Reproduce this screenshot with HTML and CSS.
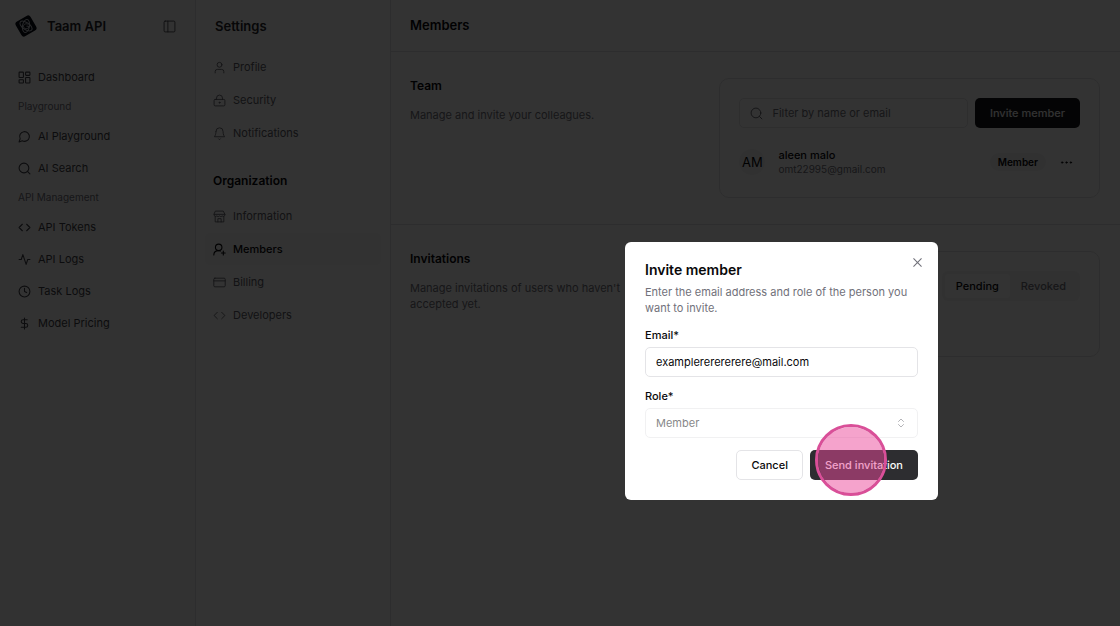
FILE: index.html
```html
<!DOCTYPE html>
<html lang="en">
<head>
<meta charset="utf-8">
<meta name="viewport" content="width=device-width, initial-scale=1">
<title>Members - Taam API</title>
<link rel="stylesheet" href="styles.css">
</head>
<body>
<div class="app">
  <aside class="sidebar">
    <div class="brand">
      <svg class="logo" viewBox="0 0 24 24"><rect x="3.500" y="3.500" width="17" height="17" rx="3" transform="rotate(-30 12 12)" fill="#060a14"/><g fill="none" stroke="#c4c8d0" stroke-width="1"><ellipse cx="12" cy="12" rx="7" ry="3.500" transform="rotate(35 12 12)"/><ellipse cx="12" cy="12" rx="6.500" ry="3.500" transform="rotate(100 12 12)"/><path d="M14.500 10.500c-2-1.500-5-.5-5 1.800s3 3.200 5 1.500v-1.600h-2"/></g></svg>
      <span class="brand-name">Taam API</span>
      <button class="icon-btn" aria-label="Toggle sidebar"><svg class="icon thin" viewBox="0 0 24 24"><rect x="2" y="2" width="20" height="20" rx="2"/><path d="M9 2v20"/></svg></button>
    </div>
    <nav class="nav nav-main" aria-label="Main">
      <a class="nav-item" href="#"><svg class="icon" viewBox="0 0 24 24"><rect x="2" y="2" width="8" height="10" rx="1"/><rect x="14" y="2" width="8" height="6" rx="1"/><rect x="14" y="12" width="8" height="10" rx="1"/><rect x="2" y="16" width="8" height="6" rx="1"/></svg>Dashboard</a>
      <span class="nav-label">Playground</span>
      <a class="nav-item" href="#"><svg class="icon" viewBox="0 0 24 24"><path d="M7.900 20A9 9 0 1 0 4 16.100L2 22Z"/></svg>AI Playground</a>
      <a class="nav-item" href="#"><svg class="icon" viewBox="0 0 24 24"><circle cx="11" cy="11" r="9"/><path d="m22 22-4.500-4.500"/></svg>AI Search</a>
      <span class="nav-label">API Management</span>
      <a class="nav-item" href="#"><svg class="icon" viewBox="0 0 24 24"><path d="m16 18 6-6-6-6M8 6l-6 6 6 6"/></svg>API Tokens</a>
      <a class="nav-item" href="#"><svg class="icon" viewBox="0 0 24 24"><path d="M22 12h-4l-3 9L9 3l-3 9H2"/></svg>API Logs</a>
      <a class="nav-item" href="#"><svg class="icon" viewBox="0 0 24 24"><circle cx="12" cy="12" r="10"/><path d="M12 6v6l4 2"/></svg>Task Logs</a>
      <a class="nav-item" href="#"><svg class="icon" viewBox="0 0 24 24"><path d="M12 2v20M17 5H9.500a3.500 3.500 0 0 0 0 7h5a3.500 3.500 0 0 1 0 7H6"/></svg>Model Pricing</a>
    </nav>
  </aside>

  <aside class="settings">
    <h2 class="settings-title">Settings</h2>
    <nav class="nav" aria-label="Settings">
      <a class="nav-item muted" href="#"><svg class="icon thin" viewBox="0 0 24 24"><circle cx="12" cy="7" r="4.500"/><path d="M4 22v-2.500a4 4 0 0 1 4-4h8a4 4 0 0 1 4 4V22"/></svg>Profile</a>
      <a class="nav-item muted" href="#"><svg class="icon thin" viewBox="0 0 24 24"><rect x="2" y="10" width="20" height="12" rx="2"/><path d="M6.500 10V7.500a5.500 5.500 0 0 1 11 0V10"/><circle cx="12" cy="16" r="1"/></svg>Security</a>
      <a class="nav-item muted" href="#"><svg class="icon thin" viewBox="0 0 24 24"><path d="M5.500 8a6.500 6.500 0 0 1 13 0c0 7 3 10 3 10h-19s3-3 3-10M10.300 22a1.940 1.940 0 0 0 3.400 0"/></svg>Notifications</a>
    </nav>
    <h3 class="group-title">Organization</h3>
    <nav class="nav" aria-label="Organization">
      <a class="nav-item muted" href="#"><svg class="icon thin" viewBox="0 0 24 24"><path d="M5 2h14l3 6v1a3 3 0 0 1-5 2 3.500 3.500 0 0 1-5 0 3.500 3.500 0 0 1-5 0 3 3 0 0 1-5-2V8zM2 8h20M4 12v10h16V12M9 22v-6h6v6"/></svg>Information</a>
      <a class="nav-item active" href="#" aria-current="page"><svg class="icon" viewBox="0 0 24 24"><circle cx="10.500" cy="8" r="6"/><path d="M1.500 22c0-4.500 3-8 9-8 1.500 0 2.500.2 3.500.7M19 15v7M15.500 18.500h7"/></svg>Members</a>
      <a class="nav-item muted" href="#"><svg class="icon thin" viewBox="0 0 24 24"><rect x="1.500" y="4" width="21" height="16" rx="2"/><path d="M1.500 9h21"/></svg>Billing</a>
      <a class="nav-item muted" href="#"><svg class="icon thin" viewBox="0 0 24 24"><path d="m16 18 6-6-6-6M8 6l-6 6 6 6"/></svg>Developers</a>
    </nav>
  </aside>

  <main class="main">
    <header class="page-head"><h1 class="page-title">Members</h1></header>
    <section class="section">
      <div>
        <h2 class="section-title">Team</h2>
        <p class="section-text">Manage and invite your colleagues.</p>
      </div>
      <div class="card">
        <div class="toolbar">
          <label class="filter"><svg class="icon thin" viewBox="0 0 24 24"><circle cx="11" cy="11" r="9"/><path d="m22 22-4.500-4.500"/></svg><input class="filter-input" type="text" placeholder="Filter by name or email" aria-label="Filter by name or email"></label>
          <button class="btn btn-dark">Invite member</button>
        </div>
        <div class="member">
          <span class="avatar">AM</span>
          <div class="who"><span class="who-name">aleen malo</span><span class="who-mail">omt22995@gmail.com</span></div>
          <span class="badge">Member</span>
          <button class="icon-btn" aria-label="More actions"><svg class="icon dots" viewBox="0 0 24 24"><circle cx="4" cy="12" r="1.500"/><circle cx="12" cy="12" r="1.500"/><circle cx="20" cy="12" r="1.500"/></svg></button>
        </div>
      </div>
    </section>
    <section class="section">
      <div>
        <h2 class="section-title">Invitations</h2>
        <p class="section-text">Manage invitations of users who haven't accepted yet.</p>
      </div>
      <div class="card card-invites">
        <div class="tabs" role="tablist">
          <button class="tab selected" role="tab" aria-selected="true">Pending</button>
          <button class="tab" role="tab" aria-selected="false">Revoked</button>
        </div>
      </div>
    </section>
  </main>
</div>

<div class="overlay"></div>
<form class="modal" role="dialog" aria-modal="true" aria-labelledby="dialog-title">
  <button class="close" type="button" aria-label="Close"><svg class="icon" viewBox="0 0 24 24"><path d="M5 5l14 14M19 5 5 19"/></svg></button>
  <h2 class="modal-title" id="dialog-title">Invite member</h2>
  <p class="modal-text">Enter the email address and role of the person you want to invite.</p>
  <label class="field-label" for="email">Email*</label>
  <input class="field" id="email" type="text" value="examplererererere@mail.com">
  <label class="field-label" for="role">Role*</label>
  <div class="select-wrap">
    <select class="field" id="role" disabled><option>Member</option></select>
    <svg class="icon chevrons" viewBox="0 0 24 24"><path d="m7 15 5 5 5-5M7 9l5-5 5 5"/></svg>
  </div>
  <div class="actions">
    <button class="btn btn-light" type="button">Cancel</button>
    <button class="btn btn-send" type="button">Send invitation</button>
  </div>
  <span class="click-ring"></span>
</form>
</body>
</html>
```
FILE: styles.css
```css
* { box-sizing: border-box; }
body, h1, h2, h3, p { margin: 0; }
body {
  font-family: Inter, "Liberation Sans", sans-serif;
  font-size: 11px;
  line-height: 16px;
  color: #09090b;
  background: #fff;
}
button, input, select { font: inherit; color: inherit; }
a { color: inherit; text-decoration: none; }
.icon {
  width: 13px;
  height: 13px;
  flex: none;
  display: block;
  fill: none;
  stroke: currentColor;
  stroke-width: 2;
  stroke-linecap: round;
  stroke-linejoin: round;
}
.thin { stroke-width: 1.600; }
.icon-btn { border: 0; background: none; padding: 0; color: #3f3f46; }

.app { display: grid; grid-template-columns: 196px 195px 1fr; min-height: 100vh; }
.sidebar { background: #fafafa; border-right: 1px solid #e0e0e3; padding: 0 12px; }
.settings { border-right: 1px solid #e0e0e3; padding: 0 9px; }

.brand { display: flex; align-items: center; height: 52px; padding: 0 7px 0 2px; }
.logo { width: 24px; height: 24px; }
.brand-name { flex: 1; margin-left: 9px; font-size: 13px; font-weight: 600; color: #27272a; }

.nav { display: flex; flex-direction: column; }
.nav-main { margin-top: 9px; color: #3f3f46; }
.nav-item { display: flex; align-items: center; gap: 7px; height: 32px; padding: 0 6px; border-radius: 5px; }
.nav-label { height: 27px; padding: 5px 6px; font-size: 10px; color: #71717a; }
.settings .nav { gap: 1px; }
.settings .nav-item { padding: 0 8px; }
.muted { color: #5c5c64; }
.settings .active { background: #f8f8f9; font-weight: 500; }
.settings-title { padding: 0 10px; font-size: 13px; font-weight: 600; line-height: 52px; margin-bottom: -1px; color: #27272a; }
.group-title { padding: 0 8px; margin: 24px 0 11px; font-size: 12px; font-weight: 600; line-height: 16px; }

.page-head { padding: 0 19px; border-bottom: 1px solid #e0e0e3; }
.page-title { font-size: 13px; line-height: 51px; font-weight: 600; }
.section {
  display: grid;
  grid-template-columns: minmax(0, 3fr) minmax(0, 4fr);
  gap: 24px;
  padding: 26px 20px 26px 19px;
}
.section + .section { border-top: 1px solid #e0e0e3; }
.section-title { font-size: 12px; font-weight: 600; line-height: 16px; }
.section-text { max-width: 240px; margin-top: 13px; color: #71717a; }
.card { border: 1px solid #e0e0e3; border-radius: 10px; padding: 19px 19px 21px; }
.toolbar { display: flex; gap: 7px; }
.filter { display: flex; flex: 1; min-width: 0; align-items: center; gap: 9px; height: 30px; padding: 0 10px; border: 1px solid #e4e4e7; border-radius: 5px; color: #52525b; }
.filter-input { flex: 1; min-width: 0; border: 0; padding: 0; background: none; outline: 0; }
.filter-input::placeholder { color: #71717a; opacity: 1; }
.btn { height: 30px; padding: 0 14px; border: 1px solid transparent; border-radius: 5px; font-weight: 500; white-space: nowrap; }
.btn-dark { background: #18181b; color: #fafafa; }
.member { display: flex; align-items: center; margin-top: 20px; }
.avatar { display: grid; place-items: center; width: 26px; height: 26px; border-radius: 50%; background: #f4f4f5; font-size: 13px; }
.who { display: flex; flex: 1; flex-direction: column; margin-left: 13px; line-height: 14px; }
.who-name { font-weight: 500; }
.who-mail { font-size: 10px; color: #71717a; }
.badge { padding: 1px 8px; margin-right: 14px; border-radius: 10px; background: #f4f4f5; font-size: 10px; font-weight: 600; }
.member .icon-btn { margin-right: 7px; color: #09090b; }
.dots { fill: currentColor; stroke-width: 1; }
.card-invites { min-height: 106px; }
.tabs { display: flex; width: fit-content; margin-left: auto; padding: 3px; border-radius: 6px; background: #f4f4f5; }
.tab { padding: 4px 11px; border: 0; border-radius: 4px; background: none; color: #71717a; font-weight: 500; }
.tab.selected { background: #fff; color: #09090b; }

.overlay { position: fixed; inset: 0; background: rgb(0 0 0 / 80%); }
.modal {
  position: fixed;
  left: 625px;
  top: 242px;
  width: 313px;
  padding: 20px;
  border-radius: 6px;
  background: #fff;
}
.close { position: absolute; top: 14px; right: 14px; padding: 0; border: 0; background: none; color: #71717a; }
.modal-title { font-size: 14px; line-height: 16px; font-weight: 600; }
.modal-text { margin-top: 6px; color: #71717a; }
.field-label { display: block; margin: 11px 0 4px; font-weight: 500; }
.field { display: block; width: 100%; height: 30px; padding: 0 10px; border: 1px solid #e4e4e7; border-radius: 5px; background: #fff; outline: 0; }
.select-wrap { position: relative; }
select.field { appearance: none; color: #09090b; opacity: 0.500; }
.chevrons { position: absolute; right: 11px; top: 9px; width: 12px; height: 12px; color: #b4b4b8; }
.actions { display: flex; justify-content: flex-end; gap: 7px; margin-top: 12px; }
.btn-light { background: #fff; border-color: #e4e4e7; }
.btn-send { background: #2d2d30; color: #fafafa; }
.click-ring {
  position: absolute;
  left: 190px;
  top: 182px;
  width: 72px;
  height: 72px;
  border: 3px solid #d94f98;
  border-radius: 50%;
  background: rgb(236 72 153 / 50%);
  background-clip: padding-box;
  pointer-events: none;
}
```
